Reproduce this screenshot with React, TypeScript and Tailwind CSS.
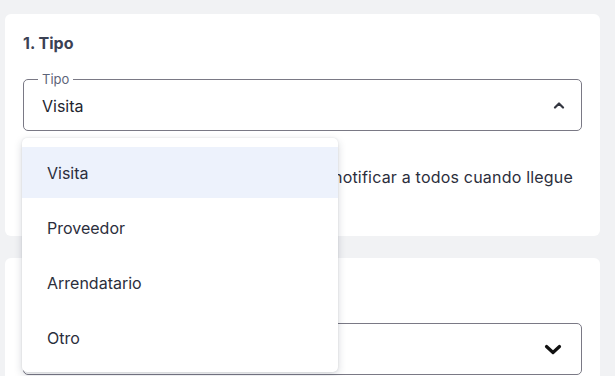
const opciones = ['Visita', 'Proveedor', 'Arrendatario', 'Otro'];

const ChevronUp = () => (
  <svg width="12" height="8" viewBox="0 0 12 8" fill="none">
    <path d="M2 6.5 L6 2.5 L10 6.5" stroke="#333640" strokeWidth="2.2" strokeLinecap="round" strokeLinejoin="round" />
  </svg>
);

const ChevronDown = () => (
  <svg width="18" height="11" viewBox="0 0 18 11" fill="none">
    <path d="M2.5 2.5 L9 8.5 L15.5 2.5" stroke="#111111" strokeWidth="3.2" strokeLinecap="round" strokeLinejoin="round" />
  </svg>
);

export default function App() {
  const selected = 'Visita';

  return (
    <div className="relative w-[615px] h-[376px] overflow-hidden bg-[#f1f2f4] px-[5px] pt-[14px] font-['Inter',sans-serif]">
      {/* Tarjeta 1 */}
      <div className="bg-white rounded-md h-[222px] w-[595px] px-[18px] pt-[19px]">
        <h2 className="text-[16px] leading-5 font-bold text-[#3b4154]">1. Tipo</h2>
        <div className="relative mt-[26px] h-[52px] border border-[#7a7985] rounded-[5px] flex items-center justify-between pl-[18px] pr-[16px]">
          <span className="absolute -top-[9px] left-[14px] bg-white px-[4px] text-[13px] leading-4 text-[#5d6479]">Tipo</span>
          <span className="text-[16px] text-[#23252f] pt-[2px]">{selected}</span>
          <ChevronUp />
        </div>
        <div className="mt-[34px] flex items-center h-6">
          <input type="checkbox" className="w-[18px] h-[18px] accent-[#3b5bdb]" defaultChecked />
          <span className="ml-[7px] text-[16px] tracking-[0.2px] text-[#2b2e3c] whitespace-nowrap">
            Permitir el ingreso sin aviso previo y notificar a todos cuando llegue
          </span>
        </div>
      </div>

      {/* Tarjeta 2 (contenido tapado por el menú) */}
      <div className="mt-[22px] bg-white rounded-md h-[200px] w-[595px] px-[18px] pt-[19px]">
        <div className="h-5" />
        <div className="mt-[26px] h-[52px] border border-[#7a7985] rounded-[5px] flex items-center justify-end pl-[18px] pr-[19px]">
          <ChevronDown />
        </div>
      </div>

      {/* Menú desplegable */}
      <ul className="absolute left-[22px] top-[138px] w-[316px] bg-white rounded-[5px] shadow-[0_3px_8px_rgba(30,40,60,0.18),0_0_2px_rgba(30,40,60,0.12)] py-[9px] flex flex-col gap-[4px]">
        {opciones.map((op) => (
          <li
            key={op}
            className={`h-[51px] flex items-center pl-[25px] text-[16px] text-[#2b2e3c] ${op === selected ? 'bg-[#edf2fc]' : ''}`}
          >
            {op}
          </li>
        ))}
      </ul>
    </div>
  );
}
